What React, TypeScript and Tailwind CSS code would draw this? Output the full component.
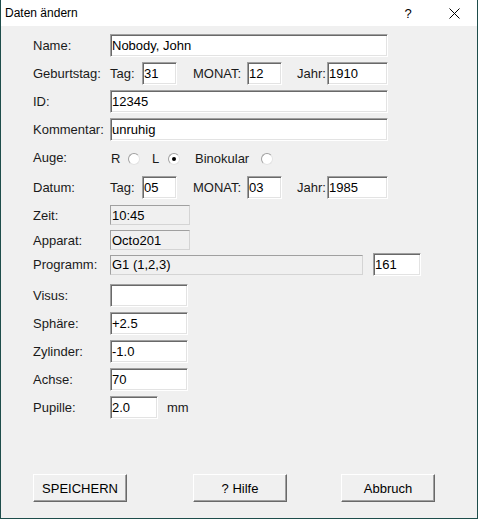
import React from 'react';

type EditProps = { value?: string; className?: string };

const Edit = ({ value = '', className = '' }: EditProps) => (
    <div
        className={`h-[23px] bg-white border border-t-[#a0a0a0] border-l-[#a0a0a0] border-b-white border-r-white shadow-[inset_1px_1px_0_#696969,inset_-1px_-1px_0_#e3e3e3] pl-[1px] pb-[1px] flex items-center text-black ${className}`}
    >
        {value}
    </div>
);

const Static = ({ value = '', className = '' }: EditProps) => (
    <div
        className={`h-[20px] bg-[#f0f0f0] border border-t-[#a0a0a0] border-l-[#a0a0a0] border-b-[#d4d4d4] border-r-[#d4d4d4] pl-[1px] flex items-center text-black ${className}`}
    >
        {value}
    </div>
);

const Radio = ({ checked = false }: { checked?: boolean }) => (
    <span className="w-[12px] h-[12px] rounded-full bg-white border border-t-[#a0a0a0] border-l-[#a0a0a0] border-b-[#e3e3e3] border-r-[#e3e3e3] flex items-center justify-center shrink-0">
        {checked && <span className="w-[4px] h-[4px] rounded-full bg-black" />}
    </span>
);

const Button = ({ label, className = '' }: { label: string; className?: string }) => (
    <div
        className={`w-[94px] h-[28px] bg-[#f0f0f0] border border-t-white border-l-white border-b-[#696969] border-r-[#696969] shadow-[inset_-1px_-1px_0_#a0a0a0] flex items-center justify-center text-black ${className}`}
    >
        {label}
    </div>
);

// Tag / MONAT / Jahr group, shared by Geburtstag and Datum
const DateFields = ({ day, month, year }: { day: string; month: string; year: string }) => (
    <>
        <span className="w-[32px]">Tag:</span>
        <Edit value={day} className="w-[35px]" />
        <span className="ml-[16px] w-[54px]">MONAT:</span>
        <Edit value={month} className="w-[35px]" />
        <span className="ml-[15px] w-[30px]">Jahr:</span>
        <Edit value={year} className="w-[61px]" />
    </>
);

const Label = ({ children }: { children: React.ReactNode }) => (
    <span className="w-[77px] shrink-0">{children}</span>
);

export default function App() {
    return (
        <div className="w-[478px] h-[519px] flex flex-col bg-[#f0f0f0] border-l border-r border-b border-[#1e4d4b] font-['Liberation_Sans',Arial,sans-serif] text-[13px] text-[#1a1a1a] leading-none select-none">
            {/* title bar */}
            <div className="h-[26px] bg-white flex items-center pl-[4px] shrink-0">
                <span className="text-[12px] text-black">Daten ändern</span>
                <span className="ml-auto w-[46px] text-center text-[13px] text-black">?</span>
                <span className="w-[46px] h-[26px] flex items-center justify-center">
                    <svg width="11" height="11" viewBox="0 0 11 11">
                        <path d="M0.5 0.5 L10.5 10.5 M10.5 0.5 L0.5 10.5" stroke="#000" strokeWidth="1" />
                    </svg>
                </span>
            </div>

            {/* body */}
            <div className="flex-1 flex flex-col pl-[32px] pt-[8px]">
                <div className="flex items-center h-[23px]">
                    <Label>Name:</Label>
                    <Edit value="Nobody, John" className="w-[278px]" />
                </div>
                <div className="flex items-center h-[23px] mt-[5px]">
                    <Label>Geburtstag:</Label>
                    <DateFields day="31" month="12" year="1910" />
                </div>
                <div className="flex items-center h-[23px] mt-[5px]">
                    <Label>ID:</Label>
                    <Edit value="12345" className="w-[278px]" />
                </div>
                <div className="flex items-center h-[23px] mt-[5px]">
                    <Label>Kommentar:</Label>
                    <Edit value="unruhig" className="w-[278px]" />
                </div>
                <div className="flex items-center h-[25px] mt-[5px]">
                    <Label>
                        <span className="relative -top-[1px]">Auge:</span>
                    </Label>
                    <span className="ml-[1px] w-[17px]">R</span>
                    <Radio />
                    <span className="ml-[12px] w-[16px]">L</span>
                    <Radio checked />
                    <span className="ml-[15px] w-[66px]">Binokular</span>
                    <Radio />
                </div>
                <div className="flex items-center h-[23px] mt-[5px]">
                    <Label>Datum:</Label>
                    <DateFields day="05" month="03" year="1985" />
                </div>
                <div className="flex items-center h-[20px] mt-[6px]">
                    <Label>Zeit:</Label>
                    <Static value="10:45" className="w-[80px]" />
                </div>
                <div className="flex items-center h-[20px] mt-[5px]">
                    <Label>Apparat:</Label>
                    <Static value="Octo201" className="w-[80px]" />
                </div>
                <div className="flex items-center h-[23px] mt-[3px]">
                    <Label>Programm:</Label>
                    <Static value="G1 (1,2,3)" className="w-[253px]" />
                    <Edit value="161" className="ml-[10px] w-[48px]" />
                </div>
                <div className="flex items-center h-[23px] mt-[8px]">
                    <Label>Visus:</Label>
                    <Edit className="w-[78px]" />
                </div>
                <div className="flex items-center h-[23px] mt-[5px]">
                    <Label>Sphäre:</Label>
                    <Edit value="+2.5" className="w-[78px]" />
                </div>
                <div className="flex items-center h-[23px] mt-[5px]">
                    <Label>Zylinder:</Label>
                    <Edit value="-1.0" className="w-[78px]" />
                </div>
                <div className="flex items-center h-[23px] mt-[5px]">
                    <Label>Achse:</Label>
                    <Edit value="70" className="w-[78px]" />
                </div>
                <div className="flex items-center h-[23px] mt-[5px]">
                    <Label>Pupille:</Label>
                    <Edit value="2.0" className="w-[48px]" />
                    <span className="ml-[9px]">mm</span>
                </div>

                {/* buttons */}
                <div className="flex items-center mt-auto mb-[16px]">
                    <Button label="SPEICHERN" />
                    <Button label="? Hilfe" className="ml-[66px]" />
                    <Button label="Abbruch" className="ml-[54px]" />
                </div>
            </div>
        </div>
    );
}
